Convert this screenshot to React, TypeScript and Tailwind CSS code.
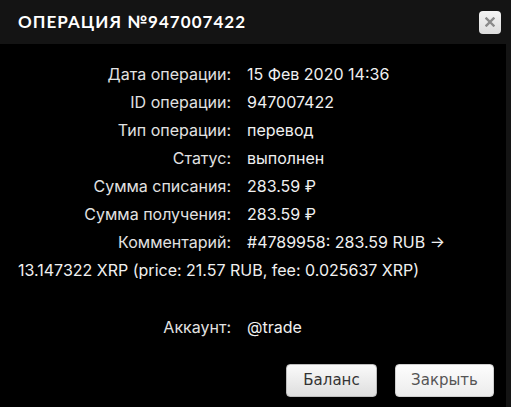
import React from 'react';

const rows: [string, string][] = [
  ['Дата операции:', '15 Фев 2020 14:36'],
  ['ID операции:', '947007422'],
  ['Тип операции:', 'перевод'],
  ['Статус:', 'выполнен'],
  ['Сумма списания:', '283.59 ₽'],
  ['Сумма получения:', '283.59 ₽'],
  ['Комментарий:', '#4789958: 283.59 RUB → 13.147322 XRP (price: 21.57 RUB, fee: 0.025637 XRP)'],
];

export default function App() {
  return (
    <div className="w-[511px] h-[407px] bg-[#141414] flex flex-col overflow-hidden font-['Inter',sans-serif]">
      {/* Header */}
      <div className="h-[44px] flex items-center justify-between pl-[18px] pr-[10px] shrink-0">
        <h2 className="text-white font-bold text-[17px] tracking-[0.06em] uppercase font-['Lato',sans-serif]">Операция №947007422</h2>
        <button className="w-[22px] h-[23px] rounded-[4px] bg-gradient-to-b from-[#f4f4f4] to-[#dcdcdc] flex items-center justify-center">
          <svg width="10" height="10" viewBox="0 0 10 10">
            <path d="M1.5 1.5 L8.5 8.5 M8.5 1.5 L1.5 8.5" stroke="#8a8a8a" strokeWidth="2.4" strokeLinecap="square" />
          </svg>
        </button>
      </div>

      {/* Body */}
      <div className="flex-1 bg-black mr-[5px] pt-[16px] pl-[18px] pr-[20px] flex flex-col">
        <div className="text-[16px] leading-[28px] text-[#e8e8e8]">
          {rows.map(([label, value]) => (
            <div key={label}>
              <span className="inline-block w-[229px] text-right pr-[16px] text-[#e2e2e2]">{label}</span>
              <span className="text-[#f0f0f0]">{value}</span>
            </div>
          ))}
          <div className="h-[29px]" />
          <div>
            <span className="inline-block w-[229px] text-right pr-[16px] text-[#e2e2e2]">Аккаунт:</span>
            <span className="text-[#f0f0f0]">@trade</span>
          </div>
        </div>

        <div className="mt-auto mb-[10px] flex justify-end gap-[18px] font-['DejaVu_Sans',sans-serif]">
          <button className="w-[91px] h-[33px] rounded-[4px] border border-[#bdbdbd] bg-gradient-to-b from-[#fafafa] to-[#dedede] text-[#333] text-[15px]">
            Баланс
          </button>
          <button className="w-[99px] h-[33px] rounded-[4px] border border-[#cfcfcf] bg-gradient-to-b from-[#fdfdfd] to-[#ececec] text-[#555] text-[15px] mr-[-8px]">
            Закрыть
          </button>
        </div>
      </div>
    </div>
  );
}
